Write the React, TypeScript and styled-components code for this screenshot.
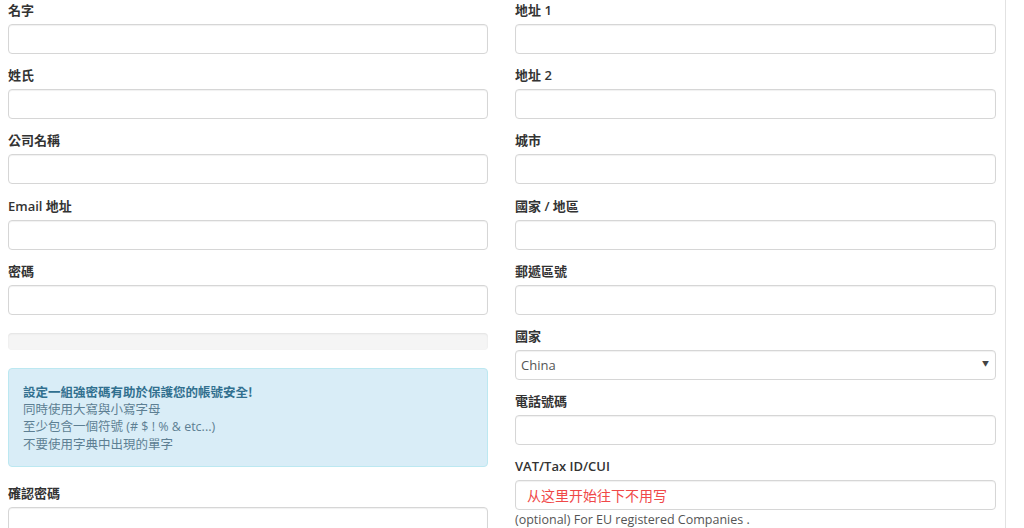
import React from "react";
import styled, { createGlobalStyle } from "styled-components";

const Global = createGlobalStyle`
  html, body { margin: 0; padding: 0; background: #fff; }
  body { font-family: "Open Sans", "Noto Sans CJK TC", sans-serif; font-size: 13px; color: #333; }
  * { box-sizing: border-box; }
`;

const Page = styled.div`
  width: 1006px;
  height: 528px;
  overflow: hidden;
  border-right: 1px solid #e2e2e2;
  padding: 1px 9px 0 8px;
`;

const Grid = styled.div`
  display: grid;
  grid-template-columns: 480px 481px;
  column-gap: 27px;
  align-items: start;
`;

const Column = styled.div`
  display: flex;
  flex-direction: column;
`;

const Group = styled.div<{ $mb?: number }>`
  display: flex;
  flex-direction: column;
  margin-bottom: ${(p) => (p.$mb ?? 12.2)}px;
`;

const Label = styled.label`
  font-family: "Open Sans", "Noto Sans CJK TC", sans-serif;
  font-size: 13px;
  font-weight: 600;
  line-height: 18px;
  height: 18px;
  color: #333;
  margin-bottom: 5px;
`;

const Input = styled.input<{ $red?: boolean }>`
  height: 30px;
  width: 100%;
  border: 1px solid #d6d6d6;
  border-radius: 4px;
  box-shadow: inset 0 1px 1px rgba(0, 0, 0, 0.06);
  padding: 0 11px;
  font-family: "Open Sans", "Noto Sans CJK SC", sans-serif;
  font-size: ${(p) => (p.$red ? "14px" : "13px")};
  color: ${(p) => (p.$red ? "#f04848" : "#555")};
  outline: none;
  background: #fff;
`;

const SelectWrap = styled.div`
  position: relative;
  height: 30px;
`;

const Select = styled.select`
  appearance: none;
  -webkit-appearance: none;
  height: 30px;
  width: 100%;
  border: 1px solid #d6d6d6;
  border-radius: 4px;
  box-shadow: inset 0 1px 1px rgba(0, 0, 0, 0.06);
  padding: 0 5px;
  font-family: "Open Sans", sans-serif;
  font-size: 13px;
  color: #555;
  background: #fff;
  outline: none;
`;

const Arrow = styled.span`
  position: absolute;
  right: 7px;
  top: 9px;
  font-size: 7px;
  color: #444;
  pointer-events: none;
  line-height: 10px;
`;

const Progress = styled.div`
  height: 17px;
  border-radius: 4px;
  background: #f5f5f5;
  box-shadow: inset 0 1px 2px rgba(0, 0, 0, 0.08);
  margin-top: 18px;
  margin-bottom: 18px;
`;

const Alert = styled.div`
  background: #d9edf7;
  border: 1px solid #bce8f1;
  border-radius: 4px;
  padding: 14px 14px 10px;
  color: #5d7f93;
  font-family: "Noto Sans CJK TC", "Open Sans", sans-serif;
  font-size: 12.5px;
  line-height: 17.8px;
  height: 99px;
  margin-bottom: 17px;
`;

const AlertTitle = styled.div`
  font-weight: 700;
  color: #31708f;
`;

const AlertLine = styled.div`
  font-family: "Open Sans", "Noto Sans CJK TC", sans-serif;
`;

const Help = styled.div`
  font-family: "Open Sans", sans-serif;
  font-size: 12.5px;
  color: #555;
  margin-top: 1px;
  line-height: 18px;
`;

const Field = ({ label, mb }: { label: string; mb?: number }) => (
  <Group $mb={mb}>
    <Label>{label}</Label>
    <Input type="text" />
  </Group>
);

export default function App() {
  return (
    <>
      <Global />
      <Page>
        <Grid>
          <Column>
            <Field label="名字" />
            <Field label="姓氏" />
            <Field label="公司名稱" />
            <Field label="Email 地址" />
            <Field label="密碼" mb={0} />
            <Progress />
            <Alert>
              <AlertTitle>設定一組強密碼有助於保護您的帳號安全!</AlertTitle>
              <AlertLine>同時使用大寫與小寫字母</AlertLine>
              <AlertLine>至少包含一個符號 (# $ ! % &amp; etc...)</AlertLine>
              <AlertLine>不要使用字典中出現的單字</AlertLine>
            </Alert>
            <Field label="確認密碼" />
          </Column>
          <Column>
            <Field label="地址 1" />
            <Field label="地址 2" />
            <Field label="城市" />
            <Field label="國家 / 地區" />
            <Field label="郵遞區號" />
            <Group>
              <Label>國家</Label>
              <SelectWrap>
                <Select defaultValue="China">
                  <option value="China">China</option>
                </Select>
                <Arrow>▼</Arrow>
              </SelectWrap>
            </Group>
            <Field label="電話號碼" />
            <Group $mb={0}>
              <Label>VAT/Tax ID/CUI</Label>
              <Input type="text" $red defaultValue="从这里开始往下不用写" />
              <Help>(optional) For EU registered Companies .</Help>
            </Group>
          </Column>
        </Grid>
      </Page>
    </>
  );
}
